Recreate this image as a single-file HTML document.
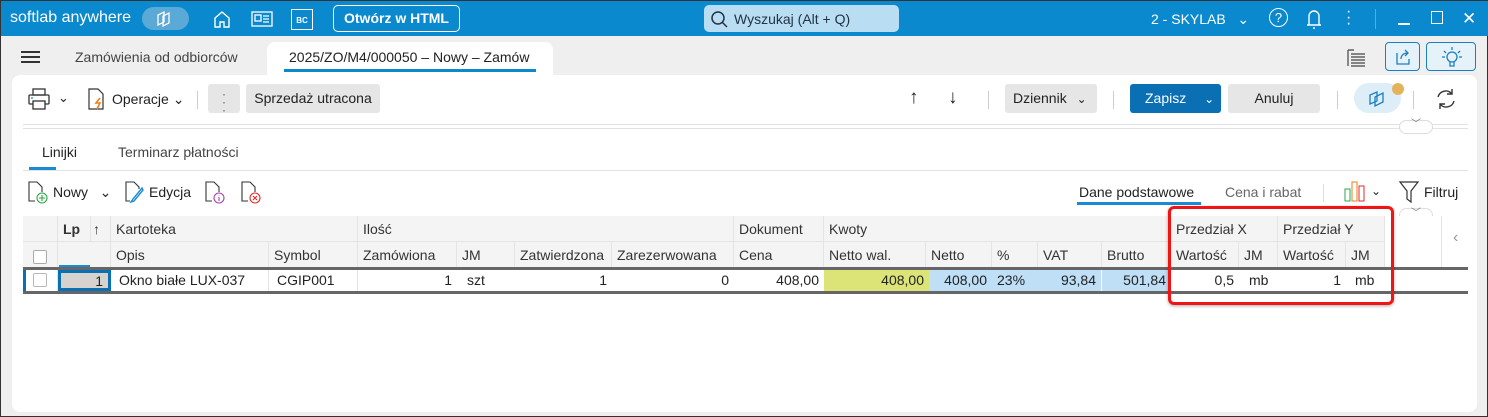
<!DOCTYPE html><html><head><meta charset="utf-8"><style>
*{box-sizing:border-box;margin:0;padding:0}
body{width:1488px;height:417px;background:#efefef;font-family:"Liberation Sans",sans-serif;font-size:13px;color:#222;position:relative;overflow:hidden;border:1px solid #333}
.a{position:absolute;white-space:nowrap}
.top{left:0;top:0;width:1488px;height:35px;background:#0a89cf}
.w{color:#fff}
.card{left:11px;top:74px;width:1465px;height:337px;background:#fff;border-radius:8px}
.btn{background:#e6e6e6;border-radius:3px}
.c{position:absolute;height:100%;border-right:1px solid #e4e4e4;padding-left:5px;line-height:26px}
.r{text-align:right;padding-right:5px}
</style></head><body>
<div class="a top"></div>
<div class="a w" style="left:9px;top:8px;font-size:16px">softlab anywhere</div>
<div class="a" style="left:141px;top:6px;width:47px;height:23px;border-radius:12px;background:#5aa9d6"></div>
<svg class="a" style="left:153px;top:9px" width="22" height="18" fill="none" stroke="#fff" stroke-width="1.3"><path d="M4 15V5l6-3v10zM9 16V6l6-3v10z"/></svg>
<svg class="a" style="left:211px;top:8px" width="20" height="20" fill="none" stroke="#fff" stroke-width="1.4"><path d="M3 9l7-6 7 6v9H12v-5H8v5H3z"/></svg>
<svg class="a" style="left:250px;top:9px" width="22" height="18" fill="none" stroke="#fff" stroke-width="1.3"><rect x="1" y="2" width="20" height="14"/><rect x="4" y="5" width="6" height="6"/><path d="M12 6h6M12 9h6M12 12h6"/></svg>
<div class="a w" style="left:290px;top:8px;width:22px;height:21px;border:1.3px solid #fff;font-size:8px;font-weight:bold;text-align:center;line-height:22px">BC</div>
<div class="a w" style="left:332px;top:4px;width:127px;height:27px;border:1.5px solid #fff;border-radius:5px;font-weight:bold;font-size:14px;text-align:center;line-height:24px">Otwórz w HTML</div>
<div class="a" style="left:703px;top:4px;width:195px;height:27px;border-radius:5px;background:#b9def4"></div>
<svg class="a" style="left:708px;top:9px" width="20" height="20" fill="none" stroke="#234" stroke-width="1.5"><circle cx="9" cy="8" r="6"/><path d="M13 12l5 5"/></svg>
<div class="a" style="left:733px;top:10px;font-size:14px;color:#234">Wyszukaj (Alt + Q)</div>
<div class="a w" style="left:1150px;top:10px;font-size:14px">2 - SKYLAB &nbsp;&nbsp;⌄</div>
<div class="a w" style="left:1268px;top:7px;width:19px;height:19px;border:1.4px solid #fff;border-radius:50%;text-align:center;font-size:13px;line-height:17px">?</div>
<svg class="a" style="left:1304px;top:6px" width="18" height="24" fill="none" stroke="#fff" stroke-width="1.4"><path d="M4 18V9a5 5 0 0110 0v9zM2 18h14M9 20v2"/></svg>
<div class="a w" style="left:1345px;top:8px;font-size:16px;line-height:6px">·<br>·<br>·</div>
<div class="a" style="left:1374px;top:8px;width:1px;height:20px;background:#5aaad8"></div>
<div class="a" style="left:1397px;top:22px;width:12px;height:1.5px;background:#fff"></div>
<div class="a" style="left:1430px;top:10px;width:12px;height:13px;border:1.4px solid #fff"></div>
<div class="a w" style="left:1461px;top:8px;font-size:17px">✕</div>
<div class="a" style="left:20px;top:50px;width:19px;height:2px;background:#333;box-shadow:0 5px 0 #333,0 10px 0 #333"></div>
<div class="a" style="left:74px;top:48px;font-size:14px;color:#444">Zamówienia od odbiorców</div>
<div class="a" style="left:266px;top:41px;width:286px;height:40px;background:#fff;border-radius:8px 8px 0 0"></div>
<div class="a" style="left:288px;top:48px;font-size:14px;width:241px;overflow:hidden;color:#222">2025/ZO/M4/000050 – Nowy – Zamówienie</div>
<div class="a" style="left:283px;top:68px;width:252px;height:3px;background:#0a89cf"></div>
<svg class="a" style="left:1345px;top:46px" width="22" height="22" fill="none" stroke="#444" stroke-width="1.2"><path d="M2 3h6M2 3v16M5 7h14M5 10h14M5 13h14M5 16h14M5 19h14"/></svg>
<div class="a" style="left:1384px;top:41px;width:35px;height:29px;border:1.3px solid #1a7fc0;border-radius:4px;background:#e6f2fa"></div>
<svg class="a" style="left:1392px;top:46px" width="20" height="20" fill="none" stroke="#1a7fc0" stroke-width="1.3"><path d="M4 6v11h12v-5M8 12c0-4 3-6 7-6M12 3l3 3-3 3"/></svg>
<div class="a" style="left:1425px;top:41px;width:50px;height:29px;border:1.3px solid #1a7fc0;border-radius:4px;background:#e6f2fa"></div>
<svg class="a" style="left:1440px;top:44px" width="22" height="24" fill="none" stroke="#1a7fc0" stroke-width="1.3"><circle cx="11" cy="12" r="5"/><path d="M9 17v4h4v-4M11 2v3M3 6l2 2M19 6l-2 2M1 12h3M18 12h3"/></svg>
<div class="a card"></div>
<svg class="a" style="left:26px;top:86px" width="24" height="24" fill="none" stroke="#333" stroke-width="1.3"><rect x="6" y="2" width="12" height="6"/><rect x="2" y="8" width="20" height="9" rx="1"/><rect x="6" y="14" width="12" height="8" fill="#fff"/><path d="M4 11h2" stroke="#1a8ad4"/></svg>
<div class="a" style="left:57px;top:89px">⌄</div>
<svg class="a" style="left:86px;top:86px" width="20" height="24" fill="none" stroke="#333" stroke-width="1.2"><path d="M2 2h9l5 5v15H2z"/><path d="M13 11l-4 5h4l-3 6" stroke="#ef7d1a" stroke-width="1.6"/></svg>
<div class="a" style="left:111px;top:90px;font-size:14px">Operacje ⌄</div>
<div class="a" style="left:196px;top:90px;width:1px;height:18px;background:#ccc"></div>
<div class="a btn" style="left:207px;top:83px;width:32px;height:29px;text-align:center;line-height:8px;padding-top:6px;font-size:12px;color:#555">·<br>·<br>·</div>
<div class="a btn" style="left:245px;top:83px;width:134px;height:29px;font-size:14px;line-height:29px;text-align:center">Sprzedaż utracona</div>
<div class="a" style="left:908px;top:86px;font-size:19px">↑</div>
<div class="a" style="left:947px;top:86px;font-size:19px">↓</div>
<div class="a" style="left:987px;top:90px;width:1px;height:18px;background:#ccc"></div>
<div class="a btn" style="left:1004px;top:83px;width:92px;height:29px;font-size:14px;line-height:29px;padding-left:8px">Dziennik <span style="font-size:12px;margin-left:6px">⌄</span></div>
<div class="a" style="left:1112px;top:90px;width:1px;height:18px;background:#ccc"></div>
<div class="a" style="left:1129px;top:83px;width:91px;height:29px;background:#0a6fb3;border-radius:3px;color:#fff;font-size:14px;line-height:29px;padding-left:15px">Zapisz <span style="font-size:12px;margin-left:14px">⌄</span></div>
<div class="a btn" style="left:1227px;top:83px;width:92px;height:29px;font-size:14px;line-height:29px;text-align:center">Anuluj</div>
<div class="a" style="left:1336px;top:90px;width:1px;height:18px;background:#ccc"></div>
<div class="a" style="left:1353px;top:82px;width:47px;height:30px;border-radius:15px;background:#ddeef9"></div>
<svg class="a" style="left:1366px;top:86px" width="22" height="22" fill="none" stroke="#1a7fc0" stroke-width="1.3"><path d="M3 17V8l7-3v9zM8 19v-9l8-4v9z"/></svg>
<div class="a" style="left:1391px;top:82px;width:12px;height:12px;border-radius:50%;background:#e3b35a"></div>
<div class="a" style="left:1412px;top:90px;width:1px;height:18px;background:#ccc"></div>
<svg class="a" style="left:1433px;top:86px" width="24" height="24" fill="none" stroke="#333" stroke-width="1.4"><path d="M4 10a8 8 0 0114-3M20 14a8 8 0 01-14 3M18 2v5h-5M6 22v-5h5"/></svg>
<div class="a" style="left:22px;top:123px;width:1445px;height:1px;background:#e2e2e2"></div>
<div class="a" style="left:22px;top:127px;width:1445px;height:1px;background:#e2e2e2"></div>
<div class="a" style="left:1398px;top:119px;width:34px;height:14px;border:1px solid #ddd;border-radius:8px;background:#fff;text-align:center;font-size:10px;color:#777;line-height:8px">﹀</div>
<div class="a" style="left:41px;top:143px;font-size:14px">Linijki</div>
<div class="a" style="left:28px;top:166px;width:27px;height:3px;background:#1a8ad4"></div>
<div class="a" style="left:117px;top:143px;font-size:14px;color:#444">Terminarz płatności</div>
<div class="a" style="left:22px;top:169px;width:1445px;height:1px;background:#e2e2e2"></div>
<svg class="a" style="left:26px;top:179px" width="22" height="24" fill="none" stroke="#333" stroke-width="1.1"><path d="M8 21H2V2h8l5 5v5"/><circle cx="15" cy="18" r="5" stroke="#2aa84a"/><path d="M15 15v6M12 18h6" stroke="#2aa84a"/></svg>
<div class="a" style="left:52px;top:183px;font-size:14px">Nowy &nbsp;&nbsp;⌄</div>
<svg class="a" style="left:123px;top:179px" width="22" height="24" fill="none" stroke="#333" stroke-width="1.1"><path d="M6 21H2V2h8l5 5v2"/><path d="M18 8L9 19l-2 3 3-1 9-11z" stroke="#1a8ad4" stroke-width="1.4"/></svg>
<div class="a" style="left:148px;top:183px;font-size:14px">Edycja</div>
<svg class="a" style="left:203px;top:179px" width="22" height="24" fill="none" stroke="#333" stroke-width="1.1"><path d="M8 21H2V2h8l5 5v5"/><circle cx="15" cy="18" r="5" stroke="#a540b0"/><path d="M15 17v4M15 15v.5" stroke="#a540b0"/></svg>
<svg class="a" style="left:239px;top:179px" width="22" height="24" fill="none" stroke="#333" stroke-width="1.1"><path d="M8 21H2V2h8l5 5v5"/><circle cx="15" cy="18" r="5" stroke="#e02a2a"/><path d="M13 16l4 4M17 16l-4 4" stroke="#e02a2a"/></svg>
<div class="a" style="left:1078px;top:183px;font-size:14px">Dane podstawowe</div>
<div class="a" style="left:1076px;top:201px;width:124px;height:3px;background:#1a8ad4"></div>
<div class="a" style="left:1224px;top:183px;font-size:14px;color:#666">Cena i rabat</div>
<div class="a" style="left:1322px;top:183px;width:1px;height:18px;background:#ddd"></div>
<svg class="a" style="left:1343px;top:179px" width="24" height="22"><rect x="1" y="9" width="5" height="12" fill="#fff" stroke="#2aa84a"/><rect x="8" y="2" width="5" height="19" fill="#fff" stroke="#ef7d1a"/><rect x="15" y="6" width="5" height="15" fill="#fff" stroke="#e02a2a"/></svg>
<div class="a" style="left:1370px;top:183px;font-size:12px">⌄</div>
<svg class="a" style="left:1397px;top:179px" width="22" height="24" fill="none" stroke="#333" stroke-width="1.2"><path d="M2 2h18l-7 9v11l-4-3v-8z"/></svg>
<div class="a" style="left:1423px;top:183px;font-size:14px">Filtruj</div>
<div class="a" style="left:1398px;top:207px;width:34px;height:15px;border:1px solid #ddd;border-radius:8px;background:#fff;text-align:center;font-size:10px;color:#777;line-height:9px">﹀</div>
<div class="a" style="left:22px;top:215px;width:1445px;height:52px;background:#f4f4f4"></div>
<div class="a" style="left:1384px;top:215px;width:83px;height:52px;background:#fff"></div>
<div class="a" style="left:1440px;top:215px;width:1px;height:52px;background:#e4e4e4"></div>
<div class="a" style="left:1452px;top:228px;color:#999;font-size:16px">‹</div>
<div class="a" style="left:22px;top:215px;width:1362px;height:26px;font-size:14px;color:#333">
<div class="c" style="left:0;width:35px"></div>
<div class="c" style="left:35px;width:33px;font-weight:bold;padding-left:5px">Lp</div>
<div class="c" style="left:68px;width:20px;padding-left:2px">↑</div>
<div class="c" style="left:88px;width:247px">Kartoteka</div>
<div class="c" style="left:335px;width:376px">Ilość</div>
<div class="c" style="left:711px;width:90px">Dokument</div>
<div class="c" style="left:801px;width:347px">Kwoty</div>
<div class="c" style="left:1148px;width:107px">Przedział X</div>
<div class="c" style="left:1255px;width:107px">Przedział Y</div>
</div>
<div class="a" style="left:22px;top:240px;width:1362px;height:27px;font-size:14px;color:#333;border-top:1px solid #e4e4e4">
<div class="c" style="left:0;width:35px"><span style="display:inline-block;width:14px;height:14px;border:1px solid #aaa;border-radius:2px;background:#fff;margin-top:8px;margin-left:5px"></span></div>
<div class="c" style="left:35px;width:53px"></div>
<div class="c" style="left:88px;width:158px">Opis</div>
<div class="c" style="left:246px;width:89px">Symbol</div>
<div class="c" style="left:335px;width:99px">Zamówiona</div>
<div class="c" style="left:434px;width:58px">JM</div>
<div class="c" style="left:492px;width:97px">Zatwierdzona</div>
<div class="c" style="left:589px;width:122px">Zarezerwowana</div>
<div class="c" style="left:711px;width:90px">Cena</div>
<div class="c" style="left:801px;width:102px">Netto wal.</div>
<div class="c" style="left:903px;width:66px">Netto</div>
<div class="c" style="left:969px;width:46px">%</div>
<div class="c" style="left:1015px;width:64px">VAT</div>
<div class="c" style="left:1079px;width:69px">Brutto</div>
<div class="c" style="left:1148px;width:68px">Wartość</div>
<div class="c" style="left:1216px;width:39px">JM</div>
<div class="c" style="left:1255px;width:68px">Wartość</div>
<div class="c" style="left:1323px;width:39px">JM</div>
</div>
<div class="a" style="left:58px;top:264px;width:31px;height:3px;background:#1a8ad4"></div>
<div class="a" style="left:22px;top:266px;width:1445px;height:3px;background:#666"></div>
<div class="a" style="left:22px;top:290px;width:1445px;height:3px;background:#666"></div>
<div class="a" style="left:22px;top:269px;width:1362px;height:21px;font-size:14px;color:#222">
<div class="c" style="left:0;width:35px;line-height:21px;border-left:3px solid #0a6fb3"><span style="display:inline-block;width:14px;height:14px;border:1px solid #bbb;border-radius:2px;margin-top:3px;margin-left:2px;vertical-align:top"></span></div>
<div class="c r" style="left:35px;width:53px;line-height:17px;background:#d6d3cf;border:3px solid #0a6fb3">1</div>
<div class="c" style="left:88px;width:158px;line-height:21px;padding-left:8px">Okno białe LUX-037</div>
<div class="c" style="left:246px;width:89px;line-height:21px;padding-left:8px">CGIP001</div>
<div class="c r" style="left:335px;width:99px;line-height:21px;border:0">1</div>
<div class="c" style="left:434px;width:58px;line-height:21px;border:0;padding-left:10px">szt</div>
<div class="c r" style="left:492px;width:97px;line-height:21px;border:0">1</div>
<div class="c r" style="left:589px;width:122px;line-height:21px;border:0">0</div>
<div class="c r" style="left:711px;width:90px;line-height:21px;border:0">408,00</div>
<div class="c r" style="left:801px;width:105px;line-height:21px;background:#dde477;border:0">408,00</div>
<div class="c r" style="left:906px;width:63px;line-height:21px;background:#bfdff7;border:0">408,00</div>
<div class="c" style="left:969px;width:46px;line-height:21px;background:#bfdff7;border:0">23%</div>
<div class="c r" style="left:1015px;width:64px;line-height:21px;background:#bfdff7;border-right:1px solid #fff">93,84</div>
<div class="c r" style="left:1079px;width:69px;line-height:21px;background:#bfdff7;border:0">501,84</div>
<div class="c r" style="left:1148px;width:68px;line-height:21px;border:0">0,5</div>
<div class="c" style="left:1216px;width:39px;line-height:21px;border:0;padding-left:10px">mb</div>
<div class="c r" style="left:1255px;width:68px;line-height:21px;border:0">1</div>
<div class="c" style="left:1323px;width:39px;line-height:21px;border:0;padding-left:9px">mb</div>
</div>
<div class="a" style="left:1167px;top:205px;width:226px;height:99px;border:3px solid #f01414;border-radius:6px;box-shadow:0 1px 3px rgba(0,0,0,.35)"></div>
</body></html>
